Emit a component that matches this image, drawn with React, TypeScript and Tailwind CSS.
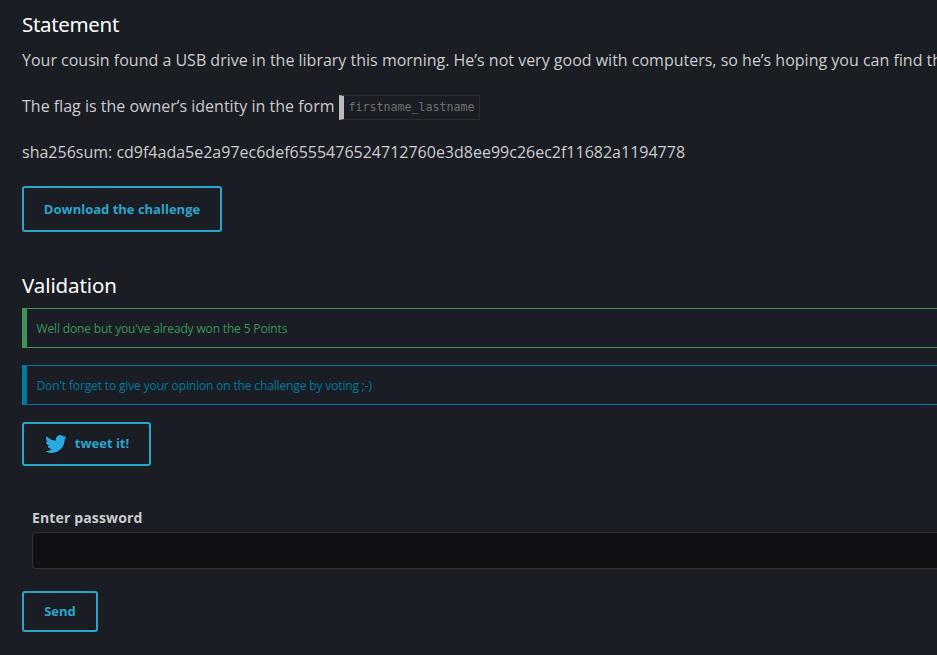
import type { ReactNode } from 'react';
import { FaTwitter } from 'react-icons/fa';

function Heading({ children, className }: { children: ReactNode; className: string }) {
  return (
    <h3 className={`h-7 text-[20.5px] leading-7 font-normal text-white [font-family:'Noto_Sans','Open_Sans',sans-serif] ${className}`}>
      {children}
    </h3>
  );
}

function OutlineButton({ children, className }: { children: ReactNode; className: string }) {
  return (
    <button
      type="button"
      className={`flex items-center justify-center rounded-[3px] border-2 border-[#2ba6cb] text-[13px] leading-none font-bold whitespace-nowrap text-[#2ba6cb] ${className}`}
    >
      {children}
    </button>
  );
}

export default function App() {
  return (
    <main className="h-[655px] w-full overflow-hidden bg-[#1a1d24] pt-[10px] pl-[22px] text-base text-[#cccccc] [font-family:'Open_Sans','Noto_Sans',sans-serif]">
      <section>
        <Heading className="tracking-[-0.33px]">Statement</Heading>
        <div className="mt-[10px] flex flex-col gap-[22px] whitespace-nowrap">
          <p className="h-6 leading-6">
            Your cousin found a USB drive in the library this morning. He’s not very good with computers, so he’s hoping you can find the
          </p>
          <p className="flex h-6 items-center leading-6">
            The flag is the owner’s identity in the form
            <code className="mt-[2px] ml-1 flex h-[25px] w-[141px] shrink-0 items-center border border-l-[5px] border-[#2c2e33] border-l-[#bbbbbb] pl-[5px] text-[11.63px] text-[#707070] [font-family:'DejaVu_Sans_Mono',monospace]">
              firstname_lastname
            </code>
          </p>
          <p className="h-6 leading-6">sha256sum: cd9f4ada5e2a97ec6def6555476524712760e3d8ee99c26ec2f11682a1194778</p>
        </div>
        <OutlineButton className="mt-[22px] h-[46px] w-[200px]">Download the challenge</OutlineButton>
      </section>

      <section className="mt-[39px]">
        <Heading className="tracking-[-0.1px]">Validation</Heading>
        <div className="mt-[9px] flex h-10 items-center border-y border-l-[5px] border-[#3c945a] pt-px pl-[9.5px] text-xs tracking-[-0.155px] text-[#3c945a]">
          Well done but you've already won the 5 Points
        </div>
        <div className="mt-[17px] flex h-10 items-center border-y border-l-[5px] border-[#007a9f] pt-px pl-[9.5px] text-xs tracking-[-0.14px] text-[#007a9f]">
          Don't forget to give your opinion on the challenge by voting ;-)
        </div>
        <OutlineButton className="mt-[17px] h-11 w-[129px] gap-2 pb-px pl-px">
          <FaTwitter size={22} color="#2ca7e0" stroke="#07090c" strokeWidth={32} className="mt-px overflow-visible [paint-order:stroke]" />
          tweet it!
        </OutlineButton>
      </section>

      <form className="mt-10">
        <div className="ml-[10px]">
          <label htmlFor="password" className="block h-[26px] text-sm leading-6 font-bold tracking-[0.14px]">Enter password</label>
          <input
            id="password"
            type="text"
            className="block h-[37px] w-full rounded-l-[4px] border border-r-0 border-[#333333] bg-[#101114]"
          />
        </div>
        <OutlineButton className="mt-[22px] h-[41px] w-[76px]">Send</OutlineButton>
      </form>
    </main>
  );
}
